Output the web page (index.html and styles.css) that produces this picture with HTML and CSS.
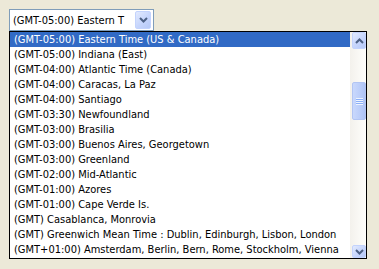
FILE: index.html
```html
<!DOCTYPE html>
<html>
<head>
<meta charset="utf-8">
<link rel="stylesheet" href="styles.css">
</head>
<body>
<div class="page">
  <div class="combo">
    <span class="combo-text">(GMT-05:00) Eastern T</span>
    <span class="combo-btn">
      <svg width="9" height="6" viewBox="0 0 9 6"><polyline points="1,1 4.5,4.5 8,1" fill="none" stroke="#4D6185" stroke-width="2"/></svg>
    </span>
  </div>
  <div class="list">
    <ul class="items">
      <li class="sel">(GMT-05:00) Eastern Time (US &amp; Canada)</li>
      <li>(GMT-05:00) Indiana (East)</li>
      <li>(GMT-04:00) Atlantic Time (Canada)</li>
      <li>(GMT-04:00) Caracas, La Paz</li>
      <li>(GMT-04:00) Santiago</li>
      <li>(GMT-03:30) Newfoundland</li>
      <li>(GMT-03:00) Brasilia</li>
      <li>(GMT-03:00) Buenos Aires, Georgetown</li>
      <li>(GMT-03:00) Greenland</li>
      <li>(GMT-02:00) Mid-Atlantic</li>
      <li>(GMT-01:00) Azores</li>
      <li>(GMT-01:00) Cape Verde Is.</li>
      <li>(GMT) Casablanca, Monrovia</li>
      <li>(GMT) Greenwich Mean Time : Dublin, Edinburgh, Lisbon, London</li>
      <li>(GMT+01:00) Amsterdam, Berlin, Bern, Rome, Stockholm, Vienna</li>
    </ul>
    <div class="scrollbar">
      <span class="sb-btn up">
        <svg width="9" height="6" viewBox="0 0 9 6"><polyline points="1,5 4.5,1.5 8,5" fill="none" stroke="#4D6185" stroke-width="2"/></svg>
      </span>
      <div class="track">
        <span class="thumb"><span class="grip"></span></span>
      </div>
      <span class="sb-btn down">
        <svg width="9" height="6" viewBox="0 0 9 6"><polyline points="1,1 4.5,4.5 8,1" fill="none" stroke="#4D6185" stroke-width="2"/></svg>
      </span>
    </div>
  </div>
</div>
</body>
</html>
```

FILE: styles.css
```css
html, body {
  margin: 0;
  padding: 0;
  background: #ECE9D8;
  width: 379px;
  height: 269px;
  overflow: hidden;
}
.page {
  padding: 9px 0 0 9px;
  font-family: "DejaVu Sans Condensed", "DejaVu Sans", sans-serif;
  font-stretch: condensed;
  font-size: 11px;
  color: #000;
}
.combo {
  box-sizing: border-box;
  width: 145px;
  height: 22px;
  border: 1px solid #7F9DB9;
  background: #fff;
  display: flex;
  align-items: center;
  padding: 0 2px 0 3px;
}
.combo-text {
  flex: 1;
  min-width: 0;
  overflow: hidden;
  line-height: 15px;
  white-space: nowrap;
}
.combo-btn, .sb-btn {
  box-sizing: border-box;
  display: flex;
  align-items: center;
  justify-content: center;
  border: 1px solid #C3D3FD;
  border-radius: 2px;
  background: linear-gradient(135deg, #E2EAFE 0%, #C6D5FC 55%, #B6C9F7 100%);
}
.combo-btn {
  flex: none;
  width: 16px;
  height: 18px;
}
.list {
  box-sizing: border-box;
  width: 358px;
  height: 228px;
  border: 1px solid #000;
  background: #fff;
  display: flex;
}
.items {
  list-style: none;
  margin: 0;
  padding: 0;
  flex: 1;
  min-width: 0;
  overflow: hidden;
}
.items li {
  height: 15px;
  line-height: 15px;
  padding-left: 4px;
  white-space: nowrap;
}
.items li.sel {
  background: #316AC5;
  color: #fff;
}
.scrollbar {
  flex: none;
  width: 16px;
  display: flex;
  flex-direction: column;
  align-items: flex-end;
  background: linear-gradient(90deg, #F3F1EC 0%, #FEFEFB 100%);
}
.sb-btn {
  width: 14px;
  flex: none;
}
.sb-btn.up {
  height: 17px;
}
.sb-btn.down {
  height: 13px;
}
.track {
  flex: 1;
  width: 14px;
  padding-top: 33px;
}
.thumb {
  box-sizing: border-box;
  display: flex;
  align-items: center;
  justify-content: center;
  width: 14px;
  height: 38px;
  border: 1px solid #B2C5F3;
  border-radius: 2px;
  background: linear-gradient(90deg, #C9D8FC 0%, #BACDF9 60%, #AFC4F5 100%);
}
.grip {
  width: 7px;
  height: 7px;
  background: repeating-linear-gradient(180deg, #EEF4FE 0 1px, #8CB0F8 1px 2px);
}
```
